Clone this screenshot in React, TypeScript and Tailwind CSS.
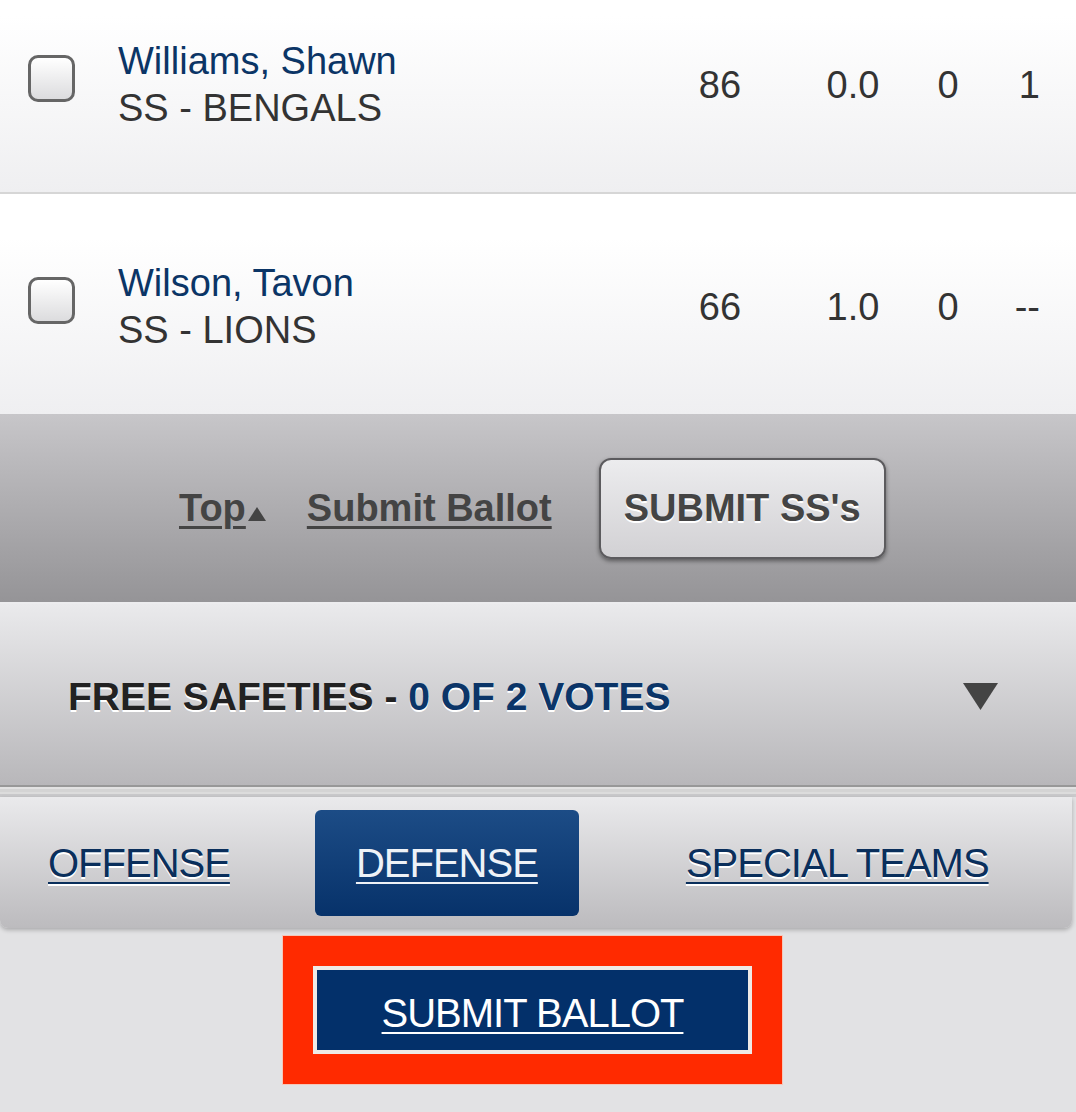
import React from "react";

const font = { fontFamily: '"Liberation Sans", Arial, sans-serif' };

interface PlayerRowProps {
  name: string;
  position: string;
  stats: string[];
  first?: boolean;
}

const PlayerRow: React.FC<PlayerRowProps> = ({ name, position, stats, first }) => {
  return (
    <div
      className={`flex items-center h-[220px] pt-[6px] bg-gradient-to-b from-white from-20% to-[#efeff1] ${
        first ? "-mt-[28px]" : ""
      }`}
    >
      <div className="ml-[28px] mb-[14px] size-[47px] shrink-0 rounded-[10px] border-[3px] border-[#666] bg-gradient-to-b from-white to-[#dcdcde]" />
      <div className="ml-[43px] flex-1 flex flex-col">
        <span className="text-[38px] leading-[47px] text-[#0b3566]">{name}</span>
        <span className="text-[38px] leading-[47px] text-[#333]">{position}</span>
      </div>
      <div className="w-[120px] text-center text-[38px] text-[#333]">{stats[0]}</div>
      <div className="w-[146px] text-center text-[38px] text-[#333]">{stats[1]}</div>
      <div className="w-[44px] text-center text-[38px] text-[#333]">{stats[2]}</div>
      <div className="w-[106px] text-right pr-[36px] text-[38px] text-[#333]">{stats[3]}</div>
    </div>
  );
};

export default function App() {
  return (
    <div className="w-[1076px] h-[1112px] overflow-hidden bg-[#e2e2e4]" style={font}>
      <PlayerRow first name="Williams, Shawn" position="SS - BENGALS" stats={["86", "0.0", "0", "1"]} />
      <div className="h-[2px] bg-[#d6d6d6]" />
      <PlayerRow name="Wilson, Tavon" position="SS - LIONS" stats={["66", "1.0", "0", "--"]} />

      {/* action bar */}
      <div className="h-[188px] flex items-center bg-gradient-to-b from-[#c7c6c9] to-[#959497] pl-[179px]">
        <a className="flex items-end text-[38px] font-bold text-[#444] leading-none">
          <span className="underline decoration-[3px] underline-offset-[5px]">Top</span>
          <svg width="18" height="14" viewBox="0 0 18 14" className="mb-[6px] ml-[2px]">
            <polygon points="0,14 18,14 9,0" fill="#444" />
          </svg>
        </a>
        <a className="ml-[41px] text-[38px] font-bold text-[#444] leading-none underline decoration-[3px] underline-offset-[5px]">
          Submit Ballot
        </a>
        <button className="ml-[47px] w-[287px] h-[101px] rounded-[12px] border-2 border-[#5c5b5e] bg-gradient-to-b from-[#ececee] to-[#d2d1d4] shadow-[0_2px_4px_rgba(0,0,0,0.45)] text-[38px] font-bold text-[#444] [text-shadow:0_2px_0_#fff]">
          SUBMIT SS's
        </button>
      </div>
      <div className="h-[2px] bg-[#ececee]" />

      {/* section header */}
      <div className="h-[181px] flex items-center justify-between bg-gradient-to-b from-[#eaeaec] to-[#b8b7ba] pl-[68px] pr-[78px]">
        <div className="text-[39px] font-bold [text-shadow:0_2px_0_#fff] pt-[6px]">
          <span className="text-[#222]">FREE SAFETIES - </span>
          <span className="text-[#0b3568]">0 OF 2 VOTES</span>
        </div>
        <svg width="35" height="27" viewBox="0 0 35 27" className="mt-[4px]">
          <polygon points="0,0 35,0 17.5,27" fill="#444" />
        </svg>
      </div>
      <div className="h-[2px] bg-[#989898]" />
      <div className="h-[2px] bg-[#e2e2e2]" />
      <div className="h-[3px] bg-[#d4d4d4]" />
      <div className="h-[2px] bg-[#dcdcdc]" />
      <div className="h-[3px] bg-[#c9c9cb]" />

      {/* tabs */}
      <div className="mr-[4px] h-[131px] flex items-center rounded-b-[8px] bg-gradient-to-b from-[#eaeaec] to-[#bcbbbe] shadow-[0_2px_4px_rgba(0,0,0,0.25)] pl-[48px]">
        <a className="text-[40px] tracking-[-1px] text-[#0a2f5c] underline decoration-2 underline-offset-[5px] [text-shadow:0_2px_0_#fff]">
          OFFENSE
        </a>
        <div className="ml-[85px] w-[264px] h-[106px] flex items-center justify-center rounded-[6px] bg-gradient-to-b from-[#1c4c86] to-[#07326a]">
          <a className="text-[40px] tracking-[-1px] text-[#eef2f7] underline decoration-2 underline-offset-[5px]">
            DEFENSE
          </a>
        </div>
        <a className="ml-[107px] text-[40px] tracking-[-1px] text-[#0a2f5c] underline decoration-2 underline-offset-[5px] [text-shadow:0_2px_0_#fff]">
          SPECIAL TEAMS
        </a>
      </div>

      {/* submit ballot */}
      <div className="mt-[8px] flex justify-start pl-[283px]">
        <div className="w-[499px] h-[148px] p-[30px] bg-[#ff2a00] ring-1 ring-[#f6c6b8]">
          <div className="h-full border-[4px] border-[#efeae6] bg-[#03306a] flex items-center justify-center pt-[6px]">
            <a className="text-[40px] tracking-[-1px] text-white underline decoration-2 underline-offset-[5px]">
              SUBMIT BALLOT
            </a>
          </div>
        </div>
      </div>
    </div>
  );
}
